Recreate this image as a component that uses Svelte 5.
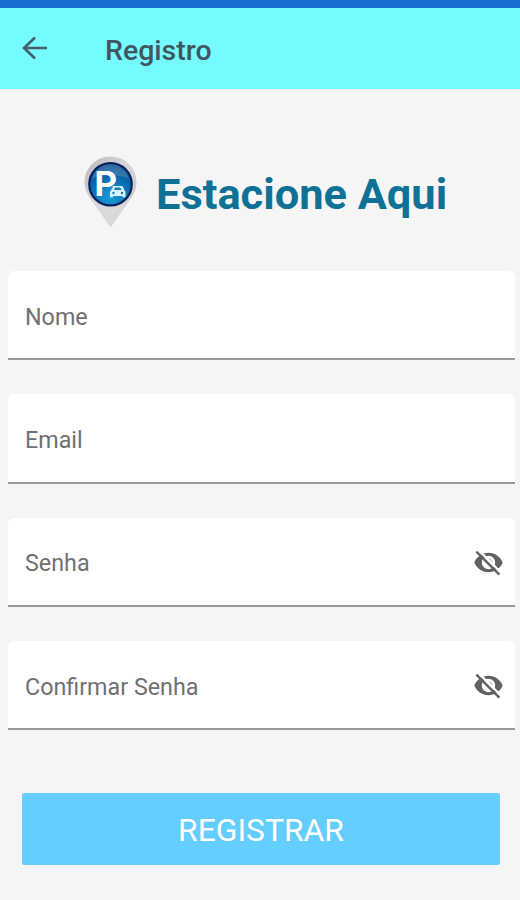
<script lang="ts">
  interface Field {
    id: string;
    label: string;
    secret: boolean;
  }

  const fields: Field[] = [
    { id: 'nome', label: 'Nome', secret: false },
    { id: 'email', label: 'Email', secret: false },
    { id: 'senha', label: 'Senha', secret: true },
    { id: 'confirmar', label: 'Confirmar Senha', secret: true }
  ];

  let values: Record<string, string> = $state({ nome: '', email: '', senha: '', confirmar: '' });
  let visible: Record<string, boolean> = $state({});
</script>

<div class="screen">
  <div class="status"></div>
  <header>
    <button type="button" class="back" aria-label="Voltar">
      <svg width="26" height="24" viewBox="0 0 26 24">
        <path d="M25 12H2M13 1.5L2 12l11 10.5" />
      </svg>
    </button>
    <h1>Registro</h1>
  </header>

  <div class="brand">
    <svg class="pin" width="55" height="72" viewBox="0 0 55 72" aria-hidden="true">
      <defs>
        <linearGradient id="shell" x1="0" y1="0" x2="1" y2="1">
          <stop offset="0" stop-color="#b9b9bd" />
          <stop offset="0.45" stop-color="#d6d6da" />
          <stop offset="1" stop-color="#c4c4c8" />
        </linearGradient>
        <radialGradient id="disc" cx="0.5" cy="0.8" r="0.8">
          <stop offset="0" stop-color="#1a9cd8" />
          <stop offset="0.55" stop-color="#0b6fb4" />
          <stop offset="1" stop-color="#0b4788" />
        </radialGradient>
      </defs>
      <path
        d="M27.500 .5C13 .5 1.500 12 1.500 26.500c0 6 2 10.500 5 15L27.500 71l21-29.500c3-4.500 5-9 5-15C53.500 12 42 .5 27.500 .5z"
        fill="url(#shell)"
      />
      <path d="M8 43c10 10 29 10 39 0L27.500 70z" fill="#d9d9dc" />
      <circle cx="27.500" cy="28.200" r="21.300" fill="url(#disc)" stroke="#0a1c58" stroke-width="2" />
      <path d="M9 23a19 19 0 0 1 37 0c-8-5-29-5-37 0z" fill="#fff" opacity="0.16" />
      <text x="11.500" y="39.500" class="letter">P</text>
      <path
        d="M28 34.500l2.200-4.500h9.200l2.200 4.500.9 1.200v5.500h-3V40h-9.400v1.200H27v-5.500z"
        fill="#d9f2fb"
      />
      <path d="M31 34l1.200-2.500h5.200l1.200 2.500z" fill="#1180bf" />
      <circle cx="30.500" cy="37" r="1.200" fill="#1180bf" />
      <circle cx="39" cy="37" r="1.200" fill="#1180bf" />
    </svg>
    <h2>Estacione Aqui</h2>
  </div>

  <form onsubmit={(e) => e.preventDefault()}>
    {#each fields as f (f.id)}
      <div class="field">
        {#if !values[f.id]}
          <label for={f.id}>{f.label}</label>
        {/if}
        <input
          id={f.id}
          type={f.secret && !visible[f.id] ? 'password' : 'text'}
          value={values[f.id]}
          oninput={(e) => (values[f.id] = e.currentTarget.value)}
        />
        {#if f.secret}
          <button
            type="button"
            class="eye"
            aria-label="Mostrar senha"
            onclick={() => (visible[f.id] = !visible[f.id])}
          >
            <svg width="31" height="31" viewBox="0 0 24 24">
              <!-- eye with an open iris, crossed by a slash -->
              <path
                fill-rule="evenodd"
                d="M12 4.500C7 4.500 2.730 7.610 1 12c1.730 4.390 6 7.500 11 7.500s9.270-3.110 11-7.500c-1.730-4.390-6-7.500-11-7.500zM12 6.800a5.200 5.200 0 1 1 0 10.400 5.200 5.200 0 0 1 0-10.400z"
              />
              <path d="M10.500 9.300a3 3 0 0 1 4.300 3.900z" class="pupil" />
              <path d="M4.200 2.300L22.200 20.300" class="gap" />
              <path d="M2.600 3.600L20.400 21.400" class="slash" />
            </svg>
          </button>
        {/if}
      </div>
    {/each}
    <button type="submit" class="submit">REGISTRAR</button>
  </form>
</div>

<style>
  :global(body) {
    background: #f5f5f5;
  }
  .screen {
    width: 520px;
    height: 900px;
    overflow: hidden;
    background: #f5f5f5;
    font-family: Roboto, sans-serif;
  }
  button {
    border: 0;
    padding: 0;
    background: none;
    font-family: inherit;
    cursor: pointer;
  }
  svg {
    display: block;
  }
  .status {
    height: 8px;
    background: #176fd0;
  }
  header {
    display: flex;
    align-items: center;
    height: 81px;
    padding-left: 22px;
    background: #75faff;
  }
  .back {
    margin-bottom: 2px;
  }
  .back path {
    fill: none;
    stroke: #44616a;
    stroke-width: 2.6;
  }
  h1 {
    margin: 4px 0 0 57px;
    font-size: 28.5px;
    font-weight: 500;
    line-height: 34px;
    color: #40575f;
  }
  .brand {
    display: flex;
    align-items: center;
    height: 72px;
    margin-top: 67px;
    padding-left: 83px;
  }
  .letter {
    font-size: 35px;
    font-weight: 700;
    fill: #fff;
  }
  h2 {
    margin: 6px 0 0 18px;
    font-size: 43.4px;
    font-weight: 700;
    line-height: 50px;
    color: #0f7196;
    white-space: nowrap;
  }
  form {
    display: flex;
    flex-direction: column;
    gap: 34.1px;
    padding: 43px 5px 0 8px;
  }
  .field {
    position: relative;
    display: flex;
    align-items: center;
    box-sizing: border-box;
    height: 89.3px;
    padding: 0 11px 0 17px;
    background: #fff;
    border-bottom: 2px solid #999;
    border-radius: 6px 6px 0 0;
  }
  .field label {
    position: absolute;
    left: 17px;
    top: 31.6px;
    font-size: 23.3px;
    line-height: 29px;
    color: #707070;
    pointer-events: none;
  }
  input {
    flex: 1;
    min-width: 0;
    height: 60px;
    padding: 0;
    border: 0;
    outline: none;
    background: transparent;
    font: 23.3px Roboto, sans-serif;
    color: #333;
  }
  .eye {
    margin-top: 2px;
  }
  .eye path {
    fill: #626262;
  }
  .eye .pupil {
    fill: #c4c4c4;
  }
  .eye .gap,
  .eye .slash {
    fill: none;
    stroke: #fff;
    stroke-width: 1.8;
  }
  .eye .slash {
    stroke: #626262;
  }
  .submit {
    height: 72px;
    margin: 28.6px 15px 0 14px;
    padding-top: 2px;
    border-radius: 2px;
    background: #63ceff;
    color: #fff;
    font-size: 31.8px;
  }
</style>
